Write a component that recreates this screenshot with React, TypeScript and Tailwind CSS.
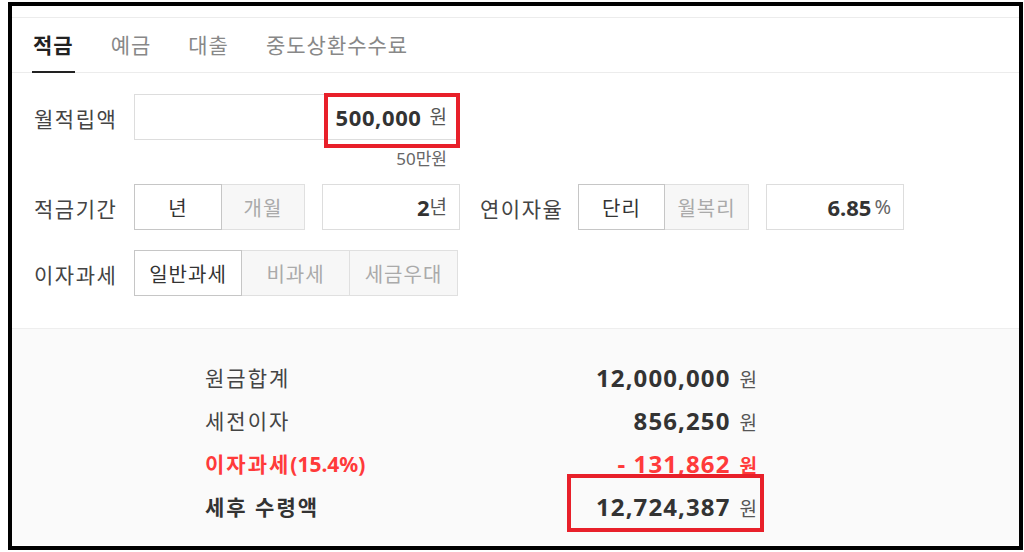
import React from "react";

const font = "font-['Noto_Sans','Noto_Sans_CJK_KR',sans-serif]";

const tabs = [
  { label: "적금", active: true },
  { label: "예금", active: false },
  { label: "대출", active: false },
  { label: "중도상환수수료", active: false },
];

function Toggle({ items, widths }: { items: { label: string; active: boolean }[]; widths: string[] }) {
  return (
    <div className="flex h-[46px]">
      {items.map((item, i) => (
        <div
          key={item.label}
          className={
            "flex items-center justify-center pt-[3px] text-[20px] tracking-[1px] border " +
            widths[i] +
            (item.active
              ? " bg-white text-[#333] border-[#c6c6c6]"
              : " bg-[#f7f7f7] text-[#aaa] border-[#e0e0e0] border-l-0")
          }
        >
          {item.label}
        </div>
      ))}
    </div>
  );
}

function ResultRow({
  label,
  suffix,
  value,
  tone = "normal",
}: {
  label: string;
  suffix?: string;
  value: string;
  tone?: "normal" | "red" | "bold";
}) {
  const red = tone === "red";
  return (
    <div className="flex h-[43px] items-center justify-between">
      <span
        className={
          "pt-[3px] text-[21px] tracking-[2px] " +
          (red ? "text-[#ff3a3a] font-bold" : tone === "bold" ? "text-[#333] font-bold" : "text-[#444]")
        }
      >
        {label}
        {suffix && <span className="tracking-normal">{suffix}</span>}
      </span>
      <span className="flex items-baseline gap-[9px]">
        <span className={"text-[24px] font-bold tracking-[1.1px] " + (red ? "text-[#ff3a3a]" : "text-[#333]")}>
          {value}
        </span>
        <span className={"text-[19px] " + (red ? "text-[#ff3a3a] font-bold" : "text-[#555]")}>원</span>
      </span>
    </div>
  );
}

export default function App() {
  return (
    <div className={"min-h-screen bg-white pl-[8px] pt-[2px] " + font}>
      <div className="relative h-[548px] w-[1015px] border-4 border-black bg-white">
        {/* tabs */}
        <div className="mt-[11px] flex h-[56px] gap-[35px] border-y border-[#ececec] pl-[20px]">
          {tabs.map((t) => (
            <div
              key={t.label}
              className={
                "flex items-center px-[1px] pt-[2px] text-[21px] tracking-[1px] " +
                (t.active ? "border-b-2 border-[#222] font-bold text-[#222] mb-[-1px]" : "text-[#888]")
              }
            >
              {t.label}
            </div>
          ))}
        </div>

        {/* form */}
        <div className="pl-[22px] pt-[21px] pb-[32px] text-[#444]">
          <div className="flex items-center">
            <span className="w-[100px] pt-[6px] text-[21px] tracking-[1.5px]">월적립액</span>
            <div className="flex h-[46px] w-[324px] items-center justify-end gap-[8px] border border-[#ddd] pr-[10px]">
              <span className="text-[22px] font-bold tracking-[0.6px] text-[#333]">500,000</span>
              <span className="text-[19px] text-[#555]">원</span>
            </div>
          </div>
          <div className="flex w-[435px] justify-end pr-[22px] pt-[9px] text-[17px] leading-[20px] text-[#666]">
            50만원
          </div>

          <div className="mt-[15px] flex items-center">
            <span className="w-[100px] pt-[5px] text-[21px] tracking-[1.5px]">적금기간</span>
            <Toggle
              items={[
                { label: "년", active: true },
                { label: "개월", active: false },
              ]}
              widths={["w-[88px]", "w-[83px]"]}
            />
            <div className="ml-[17px] flex h-[46px] w-[138px] items-center justify-end border border-[#ddd] pr-[12px]">
              <span className="text-[22px] font-bold text-[#333]">2</span>
              <span className="text-[19px] text-[#555]">년</span>
            </div>
            <span className="ml-[20px] w-[98px] pt-[5px] text-[21px] tracking-[1.5px]">연이자율</span>
            <Toggle
              items={[
                { label: "단리", active: true },
                { label: "월복리", active: false },
              ]}
              widths={["w-[87px]", "w-[84px]"]}
            />
            <div className="ml-[17px] flex h-[46px] w-[138px] items-center justify-end gap-[3px] border border-[#ddd] pr-[12px]">
              <span className="text-[22px] font-bold text-[#333]">6.85</span>
              <span className="text-[20px] text-[#666]">%</span>
            </div>
          </div>

          <div className="mt-[20px] flex items-center">
            <span className="w-[100px] pt-[5px] text-[21px] tracking-[1.5px]">이자과세</span>
            <Toggle
              items={[
                { label: "일반과세", active: true },
                { label: "비과세", active: false },
                { label: "세금우대", active: false },
              ]}
              widths={["w-[108px]", "w-[108px]", "w-[108px]"]}
            />
          </div>
        </div>

        {/* results */}
        <div className="h-[217px] border-t border-[#eeeeee] bg-[#fafafa] pt-[27px]">
          <div className="ml-[193px] w-[552px]">
            <ResultRow label="원금합계" value="12,000,000" />
            <ResultRow label="세전이자" value="856,250" />
            <ResultRow label="이자과세" suffix="(15.4%)" value="- 131,862" tone="red" />
            <ResultRow label="세후 수령액" value="12,724,387" tone="bold" />
          </div>
        </div>

        {/* annotations */}
        <div className="absolute left-[312px] top-[87px] h-[55px] w-[136px] border-4 border-[#e8202a]" />
        <div className="absolute left-[555px] top-[468px] h-[58px] w-[197px] border-4 border-[#e8202a]" />
      </div>
    </div>
  );
}
